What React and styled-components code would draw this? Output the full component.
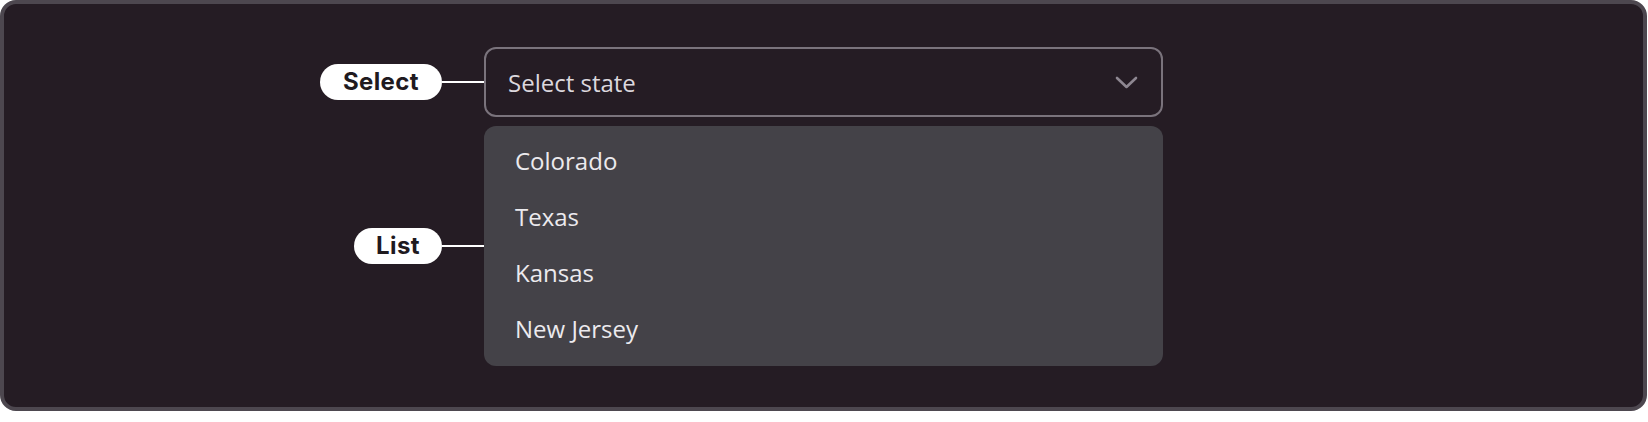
import React from 'react';
import styled, { createGlobalStyle } from 'styled-components';

const GlobalStyle = createGlobalStyle`
    html, body {
        margin: 0;
        padding: 0;
        background: #ffffff;
    }
`

const Frame = styled.div`
    box-sizing: border-box;
    width: 1647px;
    height: 411px;
    background-color: #251c24;
    border: 4px solid #4d474f;
    border-radius: 16px;
    display: grid;
    grid-template-columns: 1fr 679px 1fr;
    grid-template-rows: 70px 240px;
    row-gap: 9px;
    padding-top: 43px;
    font-family: "Open Sans", "Noto Sans", sans-serif;
`

const Annotation = styled.div`
    grid-column: 1;
    display: flex;
    align-items: center;
    justify-content: flex-end;
`

const Pill = styled.span`
    box-sizing: border-box;
    height: 36px;
    padding: 0 ${p => p.$pad}px;
    border-radius: 18px;
    background: #ffffff;
    color: #1f1a1f;
    font-family: Inter, "Liberation Sans", sans-serif;
    font-weight: 700;
    font-size: 24px;
    line-height: 36px;
    letter-spacing: 0.4px;
`

const Connector = styled.span`
    width: 42px;
    height: 1.5px;
    background: #ffffff;
`

const SelectBox = styled.div`
    grid-column: 2;
    box-sizing: border-box;
    border: 2px solid #7a737c;
    border-radius: 12px;
    display: flex;
    align-items: center;
    justify-content: space-between;
    padding: 0 23px 0 22px;
    color: #dcd8de;
    font-size: 24px;
`

const Chevron = styled.svg`
    width: 23px;
    height: 13px;
    display: block;
`

const List = styled.ul`
    grid-column: 2;
    margin: 0;
    padding: 7px 0 9px;
    list-style: none;
    background: #444248;
    border-radius: 12px;
`

const Item = styled.li`
    height: 56px;
    line-height: 56px;
    padding-left: 31px;
    color: #eceaee;
    font-size: 24px;
`

const states = ['Colorado', 'Texas', 'Kansas', 'New Jersey'];

const App = () => (
    <>
        <GlobalStyle />
        <Frame>
            <Annotation>
                <Pill $pad={23}>Select</Pill>
                <Connector />
            </Annotation>
            <SelectBox>
                <span>Select state</span>
                <Chevron viewBox="0 0 23 13" fill="none">
                    <path d="M2 2 L11.5 11 L21 2" stroke="#8e8791" strokeWidth="2.6" strokeLinecap="round" strokeLinejoin="round" />
                </Chevron>
            </SelectBox>
            <Annotation>
                <Pill $pad={22}>List</Pill>
                <Connector />
            </Annotation>
            <List>
                {states.map(s => <Item key={s}>{s}</Item>)}
            </List>
        </Frame>
    </>
)

export default App;
